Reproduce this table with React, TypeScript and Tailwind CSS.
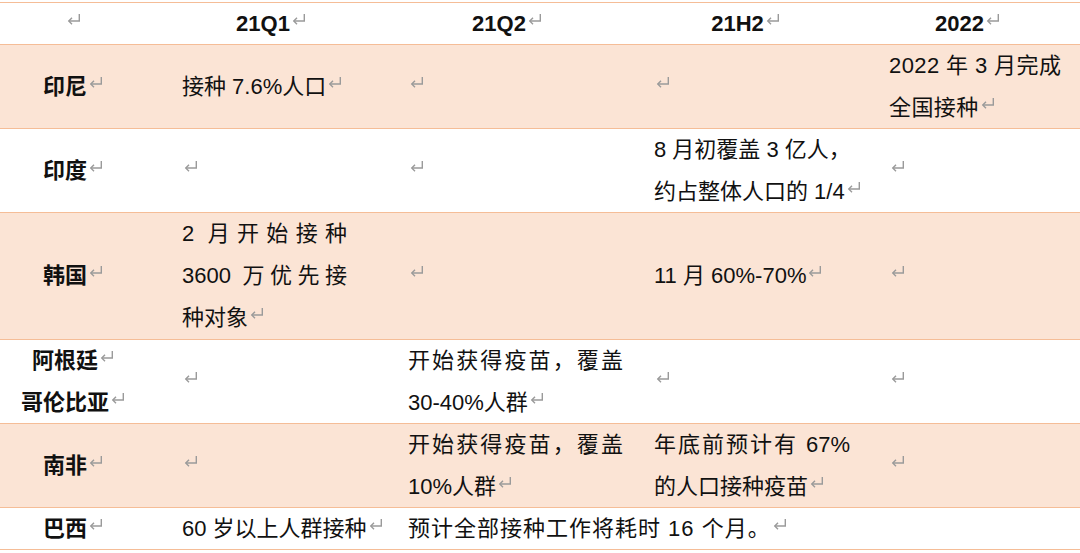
import React from "react";

type Line = string | { text: string; w: string };

const Ret = () => (
  <svg
    width="14"
    height="11"
    viewBox="0 0 14 11"
    fill="none"
    stroke="#9a9a9a"
    strokeWidth="1.4"
    className="ml-[2px] inline-block align-[6px]"
  >
    <path d="M12.3 0 V7 H1.8" />
    <path d="M5 3.8 L1.8 7 L5 10.2" />
  </svg>
);

const Cell = ({
  lines = [],
  center = false,
  bold = false,
  paras = false,
  pad = "pr-[20px]",
  span = "",
  extra = "",
}: {
  lines?: Line[];
  center?: boolean;
  bold?: boolean;
  paras?: boolean;
  pad?: string;
  span?: string;
  extra?: string;
}) => {
  const items: Line[] = lines.length ? lines : [""];
  return (
    <div
      className={`flex flex-col justify-center ${span} ${extra} ${
        center ? `items-center ${pad}` : "items-start pl-[14px]"
      } ${bold ? "font-bold" : ""}`}
    >
      {items.map((l, i) => {
        const mark = paras || i === items.length - 1;
        if (typeof l === "string") {
          return (
            <div key={i} className="whitespace-nowrap leading-[42px]">
              {l}
              {mark && <Ret />}
            </div>
          );
        }
        return (
          <div key={i} className={`${l.w} text-justify leading-[42px] [text-align-last:justify]`}>
            {l.text}
            {mark && <Ret />}
          </div>
        );
      })}
    </div>
  );
};

const cols = "grid grid-cols-[168px_226px_246px_235px_205px]";
const line = "border-b border-[#f5bd97]";

export default function App() {
  return (
    <div
      className="w-[1080px] h-[553px] overflow-hidden bg-white pt-[2px] text-[22px] text-[#111]"
      style={{ fontFamily: '"Liberation Sans", "Noto Sans CJK SC", sans-serif' }}
    >
      {/* header */}
      <div className={`${cols} h-[43px] border-t ${line}`}>
        <Cell center bold pad="pr-[22px]" />
        <Cell center bold lines={["21Q1"]} />
        <Cell center bold lines={["21Q2"]} />
        <Cell center bold pad="pr-[24px]" lines={["21H2"]} />
        <Cell center bold lines={["2022"]} />
      </div>

      {/* 印尼 */}
      <div className={`${cols} h-[84px] bg-[#fbe4d5] ${line}`}>
        <Cell center bold pad="pr-[22px]" lines={["印尼"]} />
        <Cell lines={["接种 7.6%人口"]} />
        <Cell />
        <Cell />
        <Cell extra="tracking-[0.4px]" lines={["2022 年 3 月完成", "全国接种"]} />
      </div>

      {/* 印度 */}
      <div className={`${cols} h-[84px] ${line}`}>
        <Cell center bold pad="pr-[22px]" lines={["印度"]} />
        <Cell />
        <Cell />
        <Cell lines={["8 月初覆盖 3 亿人，", "约占整体人口的 1/4"]} />
        <Cell />
      </div>

      {/* 韩国 */}
      <div className={`${cols} h-[127px] bg-[#fbe4d5] ${line}`}>
        <Cell center bold pad="pr-[22px]" lines={["韩国"]} />
        <Cell
          lines={[
            { text: "2 月开始接种", w: "w-[165px]" },
            { text: "3600 万优先接", w: "w-[165px]" },
            "种对象",
          ]}
        />
        <Cell />
        <Cell lines={["11 月 60%-70%"]} />
        <Cell />
      </div>

      {/* 阿根廷 哥伦比亚 */}
      <div className={`${cols} h-[84px] ${line}`}>
        <Cell center bold paras pad="pr-[22px]" lines={["阿根廷", "哥伦比亚"]} />
        <Cell />
        <Cell lines={[{ text: "开始获得疫苗，覆盖", w: "w-[215px]" }, "30-40%人群"]} />
        <Cell />
        <Cell />
      </div>

      {/* 南非 */}
      <div className={`${cols} h-[84px] bg-[#fbe4d5] ${line}`}>
        <Cell center bold pad="pr-[22px]" lines={["南非"]} />
        <Cell />
        <Cell lines={[{ text: "开始获得疫苗，覆盖", w: "w-[215px]" }, "10%人群"]} />
        <Cell lines={[{ text: "年底前预计有 67%", w: "w-[196px]" }, "的人口接种疫苗"]} />
        <Cell />
      </div>

      {/* 巴西 */}
      <div className={`${cols} h-[42px] ${line}`}>
        <Cell center bold pad="pr-[22px]" lines={["巴西"]} />
        <Cell lines={["60 岁以上人群接种"]} />
        <Cell
          span="col-span-3"
          extra="tracking-[1px]"
          lines={["预计全部接种工作将耗时 16 个月。"]}
        />
      </div>
    </div>
  );
}
